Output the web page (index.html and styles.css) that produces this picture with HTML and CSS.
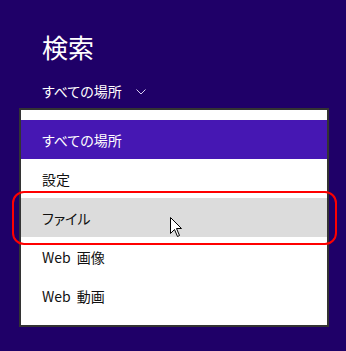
FILE: index.html
```html
<!DOCTYPE html>
<html lang="ja">
<head>
    <meta charset="UTF-8">
    <title>検索</title>
    <link rel="stylesheet" href="styles.css">
</head>
<body>

    <div class="charm">
        <h1 class="title">検索</h1>

        <div class="scope">
            <span>すべての場所</span>
            <svg class="chevron" width="10" height="6" viewBox="0 0 10 6">
                <path d="M0.5 0.5 L5 5 L9.5 0.5" fill="none" stroke="#d8d0f0" stroke-width="1"/>
            </svg>
        </div>

        <div class="menu">
            <div class="item selected">すべての場所</div>
            <div class="item">設定</div>
            <div class="item hover">ファイル</div>
            <div class="item">Web 画像</div>
            <div class="item">Web 動画</div>
        </div>

        <!-- annotation + mouse pointer drawn over the list -->
        <div class="mark"></div>
        <svg class="pointer" width="13" height="21" viewBox="0 0 13 21">
            <path d="M0.5 0.5 L0.5 16.5 L4.5 12.5 L7.5 19.5 L9.5 18.5 L6.5 11.5 L11.5 11.5 Z" fill="#fff" stroke="#000" stroke-width="1" stroke-linejoin="miter"/>
        </svg>
    </div>

</body>
</html>
```

FILE: styles.css
```css
body {
    margin: 0;
    background-color: #1f0068;
    font-family: "Noto Sans CJK JP", "Noto Sans", sans-serif;
    font-feature-settings: "palt";
}
.charm {
    position: relative;
    width: 346px;
    height: 351px;
    padding-top: 30px;
    box-sizing: border-box;
}
.title {
    margin: 0 0 0 42px;
    font-size: 26px;
    font-weight: normal;
    line-height: 34px;
    color: #fff;
}
.scope {
    display: flex;
    align-items: center;
    gap: 14px;
    margin: 16px 0 0 42px;
    height: 22px;
    font-size: 14px;
    color: #fff;
}
.chevron {
    margin-top: 2px;
}
.menu {
    margin: 6px 0 0 19px;
    width: 310px;
    padding: 10px 0;
    background-color: #fff;
    border: 2px solid #333;
    box-sizing: border-box;
}
.item {
    height: 39px;
    line-height: 40px;
    padding-left: 21px;
    font-size: 14px;
    word-spacing: 3px;
    color: #111;
}
.item.selected {
    background-color: #4617b3;
    color: #fff;
}
.item.hover {
    background-color: #dcdcdc;
}
.mark {
    position: absolute;
    left: 12px;
    top: 191px;
    width: 325px;
    height: 54px;
    border: 2px solid #f00;
    border-radius: 12px;
    box-sizing: border-box;
}
.pointer {
    position: absolute;
    left: 170px;
    top: 217px;
}
```
